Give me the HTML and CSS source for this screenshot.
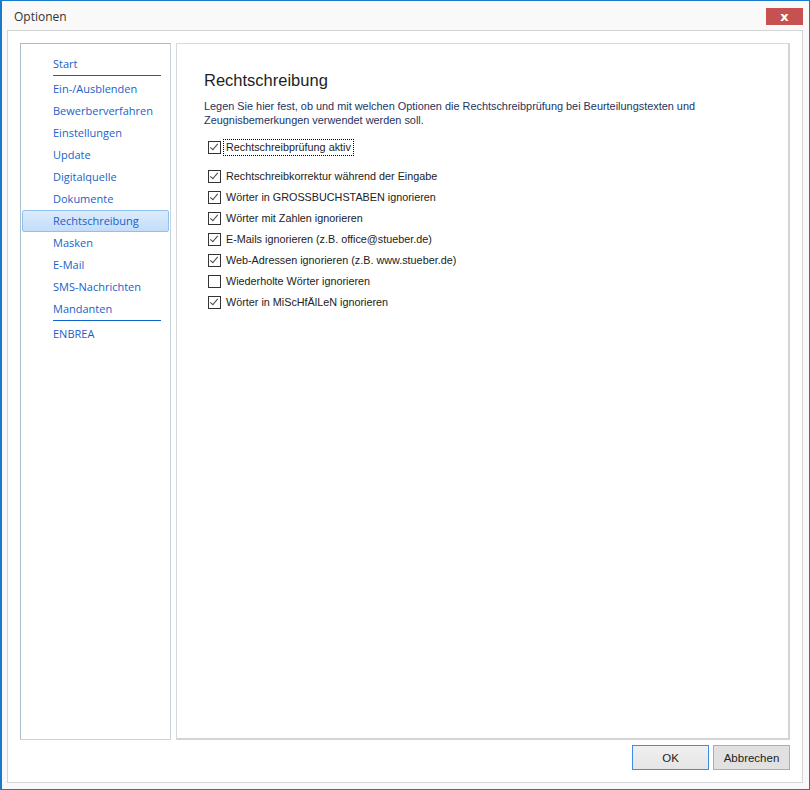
FILE: index.html
```html
<!DOCTYPE html>
<html lang="de">
<head>
    <meta charset="UTF-8">
    <title>Optionen</title>
    <link rel="stylesheet" href="styles.css">
</head>
<body>
    <div class="window">
        <div class="titlebar">
            <span class="title">Optionen</span>
            <button class="close-btn">x</button>
        </div>

        <div class="client">
            <div class="panels">
                <!-- Navigation links -->
                <nav class="nav">
                    <a class="nav-item">Start</a>
                    <div class="nav-sep"></div>
                    <a class="nav-item">Ein-/Ausblenden</a>
                    <a class="nav-item">Bewerberverfahren</a>
                    <a class="nav-item">Einstellungen</a>
                    <a class="nav-item">Update</a>
                    <a class="nav-item">Digitalquelle</a>
                    <a class="nav-item">Dokumente</a>
                    <a class="nav-item active">Rechtschreibung</a>
                    <a class="nav-item">Masken</a>
                    <a class="nav-item">E-Mail</a>
                    <a class="nav-item">SMS-Nachrichten</a>
                    <a class="nav-item">Mandanten</a>
                    <div class="nav-sep"></div>
                    <a class="nav-item">ENBREA</a>
                </nav>

                <!-- Seite Rechtschreibung -->
                <div class="page">
                    <h1 class="page-title">Rechtschreibung</h1>
                    <p class="page-desc">Legen Sie hier fest, ob und mit welchen Optionen die Rechtschreibprüfung bei Beurteilungstexten und Zeugnisbemerkungen verwendet werden soll.</p>

                    <div class="check-list">
                        <label class="check focus main-check">
                            <span class="box checked"></span>
                            <span class="check-text">Rechtschreibprüfung aktiv</span>
                        </label>
                        <label class="check">
                            <span class="box checked"></span>
                            <span class="check-text">Rechtschreibkorrektur während der Eingabe</span>
                        </label>
                        <label class="check">
                            <span class="box checked"></span>
                            <span class="check-text">Wörter in GROSSBUCHSTABEN ignorieren</span>
                        </label>
                        <label class="check">
                            <span class="box checked"></span>
                            <span class="check-text">Wörter mit Zahlen ignorieren</span>
                        </label>
                        <label class="check">
                            <span class="box checked"></span>
                            <span class="check-text">E-Mails ignorieren (z.B. office@stueber.de)</span>
                        </label>
                        <label class="check">
                            <span class="box checked"></span>
                            <span class="check-text">Web-Adressen ignorieren (z.B. www.stueber.de)</span>
                        </label>
                        <label class="check">
                            <span class="box"></span>
                            <span class="check-text">Wiederholte Wörter ignorieren</span>
                        </label>
                        <label class="check">
                            <span class="box checked"></span>
                            <span class="check-text">Wörter in MiScHfÄlLeN ignorieren</span>
                        </label>
                    </div>
                </div>
            </div>

            <div class="footer">
                <button class="btn btn-default">OK</button>
                <button class="btn">Abbrechen</button>
            </div>
        </div>
    </div>
</body>
</html>
```

FILE: styles.css
```css
* {
    margin: 0;
    padding: 0;
    box-sizing: border-box;
}

body {
    background-color: #ffffff;
    font-family: "Liberation Sans", Arial, sans-serif;
}

.window {
    width: 810px;
    height: 790px;
    border: 1px solid #1979ca;
    border-left-width: 2px;
    background-color: #f9f9f9;
    display: flex;
    flex-direction: column;
}

.titlebar {
    height: 29px;
    display: flex;
    justify-content: space-between;
    align-items: flex-start;
    padding-left: 12px;
}

.title {
    font-family: "Open Sans", sans-serif;
    font-size: 12px;
    color: #333;
    margin-top: 7px;
}

.close-btn {
    width: 37px;
    height: 17px;
    margin-top: 7px;
    margin-right: 6px;
    border: none;
    background-color: #c75050;
    color: #fff;
    font-family: "DejaVu Sans", sans-serif;
    font-weight: bold;
    font-size: 13px;
    line-height: 15px;
}

.client {
    flex: 1;
    margin: 0 6px 6px 5px;
    border: 1px solid #d5d5d5;
    background-color: #fff;
    padding: 12px;
    display: flex;
    flex-direction: column;
}

.panels {
    flex: 1;
    display: flex;
    gap: 5px;
}

.nav {
    width: 151px;
    border: 1px solid;
    border-color: #a9bdcb #c6d4de #c6d4de #a9bdcb;
    padding-top: 9px;
    display: flex;
    flex-direction: column;
}

.nav-item {
    display: block;
    height: 22px;
    margin: 0 1px;
    padding-left: 30px;
    font-family: "Open Sans", sans-serif;
    font-size: 11px;
    line-height: 20px;
    color: #1a5fc8;
    border: 1px solid transparent;
    border-radius: 2px;
}

.nav-item.active {
    background: linear-gradient(#dcebfc, #c3ddf9);
    border-color: #8fc0ef;
}

.nav-sep {
    height: 1px;
    margin: 0 9px 2px 32px;
    background-color: #0a66cc;
}

.page {
    flex: 1;
    border: 1px solid #d9d9d9;
    border-right: 2px solid #d4d4d4;
    border-bottom: 2px solid #d4d4d4;
    padding: 25px 28px 0 27px;
}

.page-title {
    font-size: 16.5px;
    font-weight: normal;
    color: #1e1e1e;
    line-height: 22px;
}

.page-desc {
    margin-top: 8px;
    font-size: 10.9px;
    line-height: 14px;
    color: #1e3460;
}

.check-list {
    margin-top: 10px;
}

.check {
    display: flex;
    align-items: center;
    height: 21px;
    padding-left: 4px;
    font-size: 10.8px;
    color: #222;
}

.main-check {
    margin-bottom: 8px;
}

.box {
    width: 13px;
    height: 13px;
    border: 1px solid #333;
    background-color: #fff;
    margin-right: 2px;
    position: relative;
}

.box.checked::after {
    content: "";
    position: absolute;
    left: 3px;
    top: 0px;
    width: 3px;
    height: 7px;
    border: solid #444;
    border-width: 0 1px 1px 0;
    transform: rotate(40deg);
}

.check-text {
    border: 1px solid transparent;
    padding: 0 2px;
    line-height: 15px;
}

.focus .check-text {
    border: 1px dotted #000;
}

.footer {
    margin-top: 5px;
    height: 25px;
    display: flex;
    justify-content: flex-end;
    gap: 4px;
}

.btn {
    width: 77px;
    height: 25px;
    border: 1px solid #adadad;
    background-color: #e1e1e1;
    font-family: "Liberation Sans", Arial, sans-serif;
    font-size: 11.5px;
    color: #222;
}

.btn-default {
    border-color: #3c8fe0;
    background: linear-gradient(#f0f0f0, #e5e5e5);
}
```
